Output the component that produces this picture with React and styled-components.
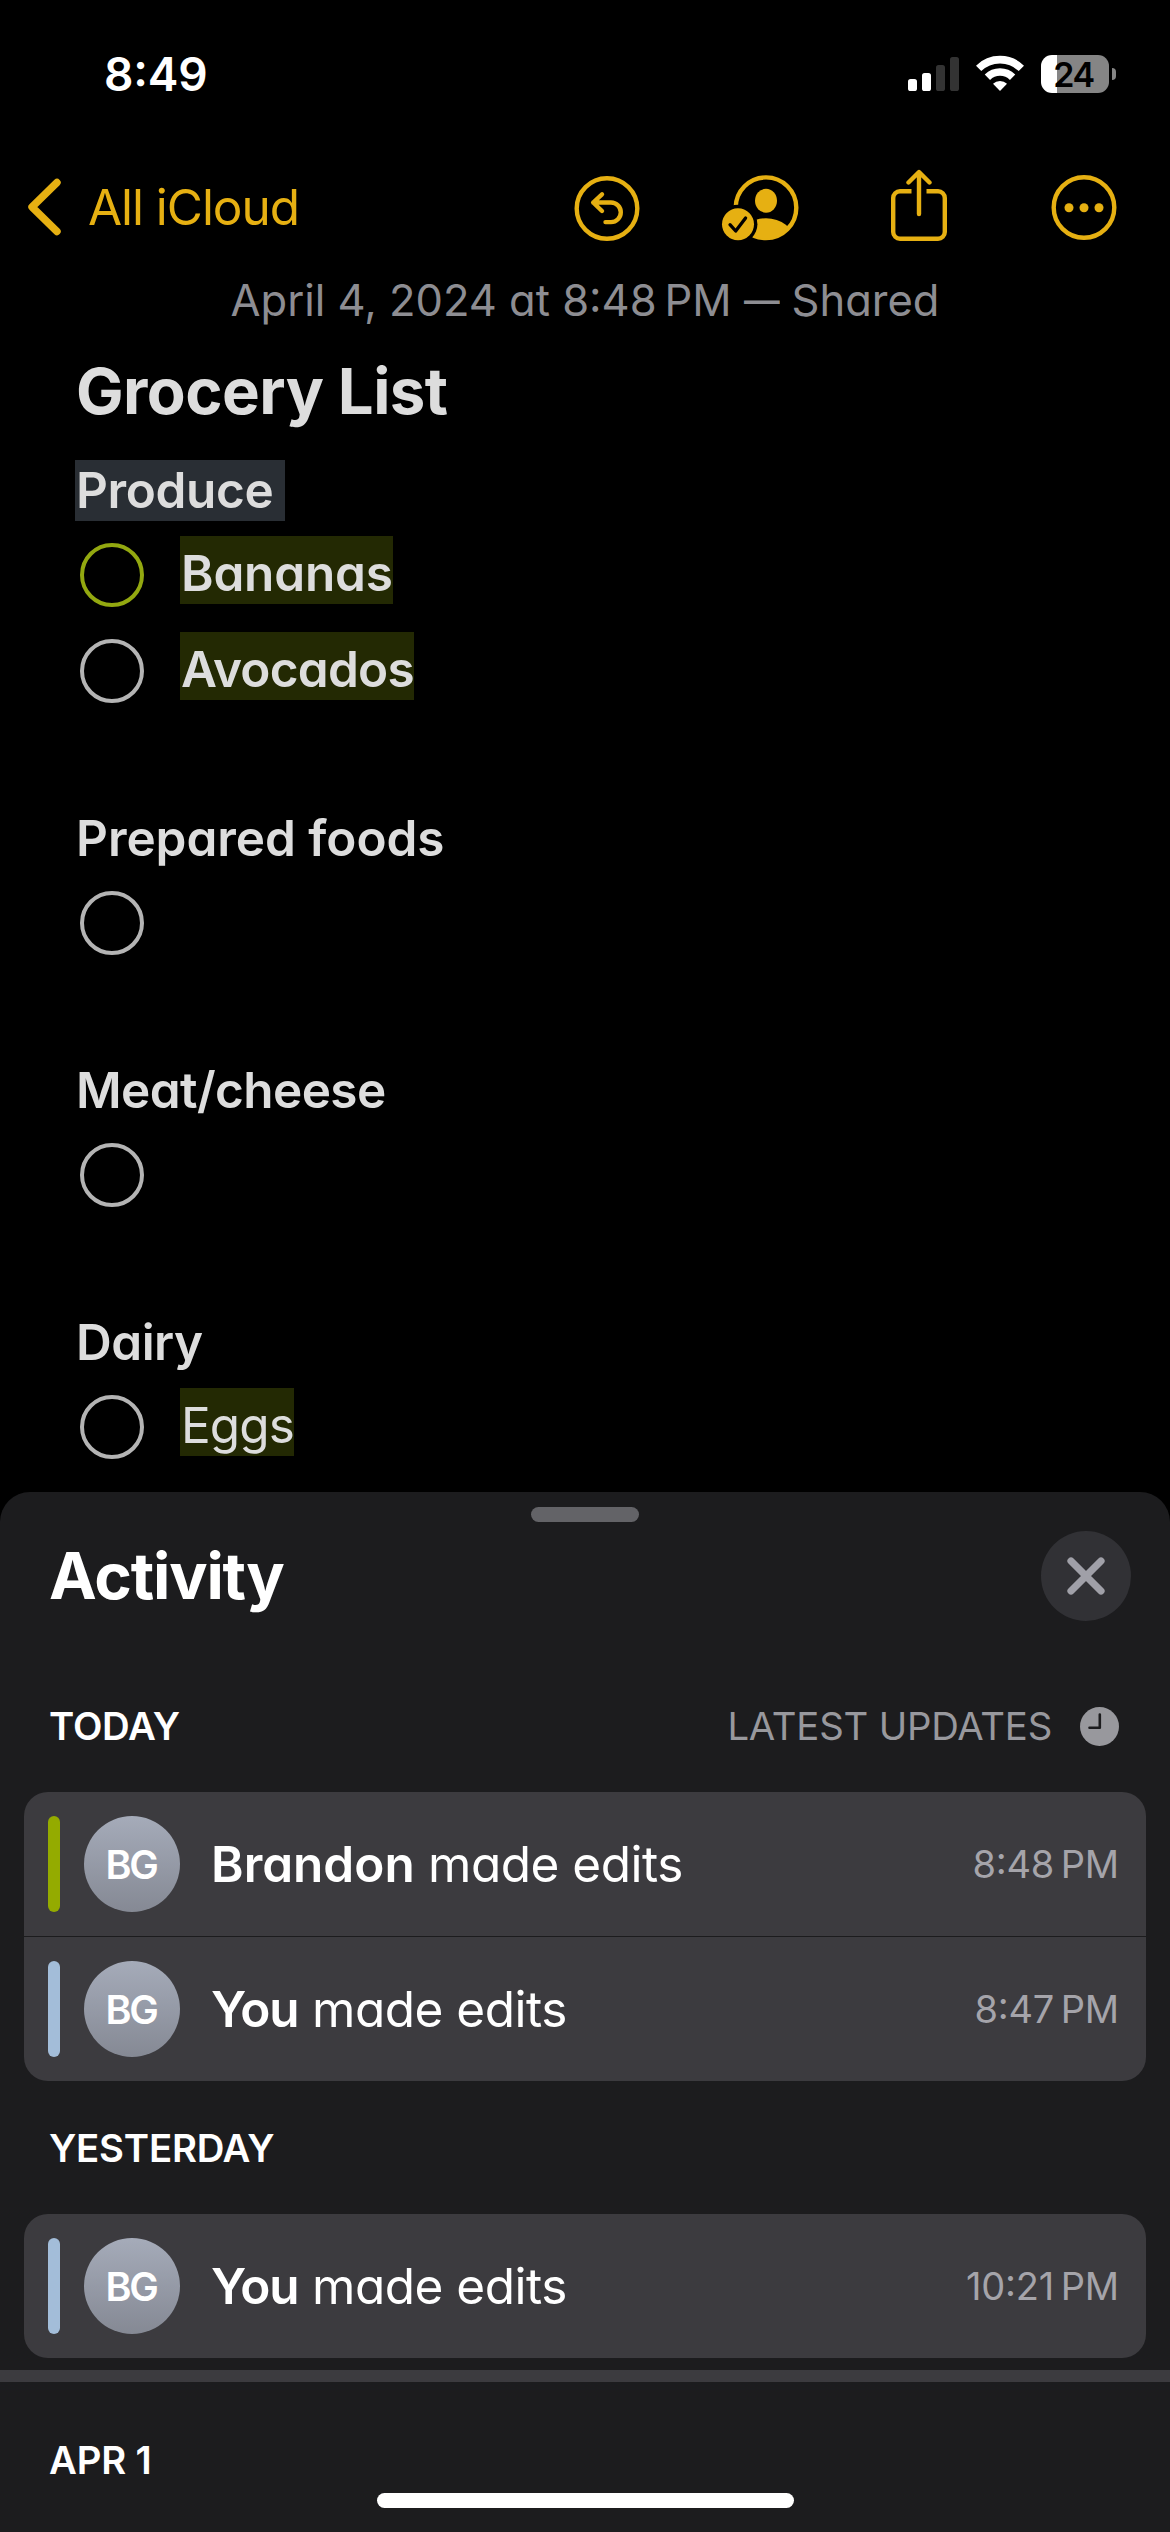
import React from 'react'
import styled, { createGlobalStyle } from 'styled-components'

const GlobalStyle = createGlobalStyle`
    body {
        margin: 0;
        background: #000000;
        font-family: Inter, "Liberation Sans", sans-serif;
        font-feature-settings: "cv11", "calt";
        font-optical-sizing: none;
    }
`

const Screen = styled.div`
    width: 1170px;
    height: 2532px;
    display: flex;
    flex-direction: column;
    overflow: hidden;
    background: #000000;
`

const StatusBar = styled.header`
    height: 146px;
    padding: 44px 54px 0 104px;
    box-sizing: border-box;
    display: flex;
    justify-content: space-between;
    align-items: flex-start;
`

const Clock = styled.div`
    font-size: 46px;
    font-weight: 600;
    line-height: 60px;
    letter-spacing: -0.2px;
    color: #ffffff;
`

const StatusIcons = styled.div`
    display: flex;
    align-items: center;
    gap: 17px;
    padding-top: 11px;
`

const Battery = styled.div`
    display: flex;
    align-items: center;
    gap: 3px;
`

const BatteryBody = styled.div`
    width: 68px;
    height: 38px;
    border-radius: 11px;
    background: linear-gradient(90deg, #ffffff 16px, #858585 16px);
    color: #000000;
    font-size: 34px;
    font-weight: 600;
    line-height: 39px;
    letter-spacing: -1.5px;
    text-align: center;
    text-indent: -3px;
`

const BatteryNub = styled.div`
    width: 4px;
    height: 12px;
    border-radius: 0 4px 4px 0;
    background: #858585;
`

const NavBar = styled.nav`
    height: 124px;
    padding: 0 51px 2px 26px;
    box-sizing: border-box;
    display: flex;
    align-items: center;
    color: #e6b012;
`

const BackLink = styled.div`
    display: flex;
    align-items: center;
    gap: 27px;
    margin-right: auto;
    font-size: 49.5px;
    line-height: 60px;
    letter-spacing: -1.05px;
`

const NavIcon = styled.svg`
    width: ${props => props.$width}px;
    height: 76px;
    margin-left: ${props => props.$gap || 0}px;
    fill: none;
    stroke: currentColor;
    stroke-width: 4.4;
    stroke-linecap: round;
    stroke-linejoin: round;
`

const Note = styled.main`
    height: 1222px;
    flex: none;
    overflow: hidden;
    color: #dddddd;
`

const NoteDate = styled.div`
    font-size: 43.5px;
    line-height: 60px;
    text-align: center;
    color: #8d8d92;
`

const Dash = styled.span`
    display: inline-block;
    margin: 0 -4px;
    transform: scaleX(0.82);
`

const NoteTitle = styled.h1`
    margin: 21px 0 29px 76px;
    font-size: 63.5px;
    font-weight: 700;
    line-height: 80px;
    letter-spacing: -0.55px;
`

const NoteSection = styled.section`
    margin: 0 0 80px 75px;
    display: flex;
    flex-direction: column;
    align-items: flex-start;
`

const SectionHeading = styled.h2`
    margin: 0 0 15px;
    padding: 0 12px 0 1px;
    font-size: 49.5px;
    font-weight: 600;
    line-height: 61px;
    letter-spacing: ${props => props.$tracking}px;
    background: ${props => props.$highlight ? '#292e34' : 'transparent'};
`

const CheckRow = styled.div`
    height: 96px;
    display: flex;
    align-items: flex-start;
`

const CheckCircle = styled.div`
    width: 64px;
    height: 64px;
    margin: 7px 36px 0 5px;
    box-sizing: border-box;
    border: 4px solid ${props => props.$active ? '#93a810' : '#b4b4b4'};
    border-radius: 50%;
`

const CheckText = styled.span`
    padding: 7px 0 0 1px;
    font-size: 49.5px;
    font-weight: ${props => props.$plain ? 400 : 600};
    line-height: 61px;
    letter-spacing: ${props => props.$tracking}px;
    background: #232903;
`

const Sheet = styled.section`
    flex: 1;
    display: flex;
    flex-direction: column;
    border-radius: 30px 30px 0 0;
    background: #1c1c1e;
    color: #ffffff;
`

const Grabber = styled.div`
    width: 108px;
    height: 15px;
    margin: 15px auto 9px;
    border-radius: 8px;
    background: #636367;
`

const SheetHeader = styled.div`
    height: 90px;
    padding: 0 39px 0 49px;
    display: flex;
    align-items: center;
    justify-content: space-between;
`

const SheetTitle = styled.h2`
    margin: 0;
    font-size: 64px;
    font-weight: 700;
    line-height: 80px;
    letter-spacing: -1.15px;
`

const CloseButton = styled.div`
    width: 90px;
    height: 90px;
    display: flex;
    align-items: center;
    justify-content: center;
    border-radius: 50%;
    background: #313135;
`

const GroupHeader = styled.div`
    margin-top: ${props => props.$top}px;
    height: 48px;
    padding: 0 51px 0 49px;
    display: flex;
    align-items: center;
    font-size: 38.3px;
    line-height: 48px;
    letter-spacing: -0.2px;
`

const GroupTitle = styled.span`
    margin-right: auto;
    font-weight: 600;
`

const SortLabel = styled.span`
    margin-right: 28px;
    color: #98989d;
`

const Card = styled.div`
    margin: 42px 24px 0;
    display: flex;
    flex-direction: column;
    gap: 1px;
    border-radius: 24px;
    overflow: hidden;
`

const ActivityRow = styled.div`
    height: 144px;
    padding: 0 27px 0 24px;
    box-sizing: border-box;
    display: flex;
    align-items: center;
    background: #3c3b3f;
`

const AuthorBar = styled.div`
    width: 12px;
    height: 96px;
    border-radius: 6px;
    background: ${props => props.$color};
`

const Avatar = styled.div`
    width: 96px;
    height: 96px;
    margin: 0 31px 0 24px;
    border-radius: 50%;
    background: linear-gradient(180deg, #a5abb9, #858994);
    font-size: 39.5px;
    font-weight: 600;
    line-height: 98px;
    letter-spacing: -2.2px;
    text-align: center;
    text-indent: -2px;
`

const ActivityText = styled.div`
    flex: 1;
    font-size: 49.5px;
    line-height: 60px;
    letter-spacing: -0.5px;
`

const AuthorName = styled.b`
    font-weight: 600;
    letter-spacing: ${props => props.$tracking}px;
`

const ActivityTime = styled.div`
    font-size: 38px;
    line-height: 48px;
    letter-spacing: -0.2px;
    color: #a5a4aa;
`

const SheetDivider = styled.div`
    height: 12px;
    margin-top: 12px;
    background: #3c3b3f;
`

const HomeIndicator = styled.div`
    width: 417px;
    height: 15px;
    margin: 9px auto 0;
    border-radius: 8px;
    background: #ffffff;
`

const GREEN = '#94ab00'
const BLUE = '#a3bdd9'

const sections = [
  {
    heading: 'Produce',
    tracking: -0.35,
    highlight: true,
    items: [
      { text: 'Bananas', tracking: -0.2, active: true },
      { text: 'Avocados', tracking: -0.75 }
    ]
  },
  { heading: 'Prepared foods', tracking: -0.05, items: [{}] },
  { heading: 'Meat/cheese', tracking: -0.6, items: [{}] },
  { heading: 'Dairy', tracking: -0.5, items: [{ text: 'Eggs', tracking: -0.9, plain: true }] }
]

const today = [
  { name: 'Brandon', tracking: 0, color: GREEN, time: '8:48\u202fPM' },
  { name: 'You', tracking: -1.1, color: BLUE, time: '8:47\u202fPM' }
]

const yesterday = [
  { name: 'You', tracking: -1.1, color: BLUE, time: '10:21\u202fPM' }
]

const SignalIcon = () => (
  <svg width="51" height="36" viewBox="0 0 51 36">
    <rect x="0" y="23" width="9" height="12" rx="2.6" fill="#fff" />
    <rect x="14" y="17" width="9" height="18" rx="2.6" fill="#fff" />
    <rect x="28" y="9" width="9" height="26" rx="2.6" fill="#333" />
    <rect x="42" y="1" width="9" height="34" rx="2.6" fill="#333" />
  </svg>
)

const WifiIcon = () => (
  <svg width="48" height="38" viewBox="0 0 48 38" fill="none" stroke="#fff" strokeWidth="7.6">
    <path d="M2.6 13.4a30.5 30.5 0 0 1 42.8 0" />
    <path d="M11.4 22.2a18 18 0 0 1 25.2 0" />
    <path d="M24 36l-7-7.2a10 10 0 0 1 14 0z" fill="#fff" stroke="none" />
  </svg>
)

const ActivityCard = ({ rows }) => (
  <Card>
    {rows.map(row => (
      <ActivityRow key={row.time}>
        <AuthorBar $color={row.color} />
        <Avatar>BG</Avatar>
        <ActivityText><AuthorName $tracking={row.tracking}>{row.name}</AuthorName> made edits</ActivityText>
        <ActivityTime>{row.time}</ActivityTime>
      </ActivityRow>
    ))}
  </Card>
)

class App extends React.Component {
  render() {
    return (
      <Screen>
        <GlobalStyle />
        <StatusBar>
          <Clock>8:49</Clock>
          <StatusIcons>
            <SignalIcon />
            <WifiIcon />
            <Battery>
              <BatteryBody>24</BatteryBody>
              <BatteryNub />
            </Battery>
          </StatusIcons>
        </StatusBar>
        <NavBar>
          <BackLink>
            <svg width="35" height="60" viewBox="0 0 35 60" fill="none" stroke="currentColor" strokeWidth="7.4" strokeLinecap="round" strokeLinejoin="round">
              <path d="M31 5.500L6 30l25 24.500" />
            </svg>
            All iCloud
          </BackLink>
          <NavIcon $width={66} viewBox="0 0 66 76">
            <circle cx="33" cy="39.500" r="30.300" />
            <path d="M28 25.300L19.200 33.500l8.800 8.500M19.200 33.500H37a9.800 9.800 0 0 1 0 19.600h-5.500" />
          </NavIcon>
          <NavIcon $width={80} $gap={80.5} viewBox="0 0 80 76">
            <clipPath id="avatar-clip">
              <circle cx="45" cy="38.700" r="31" />
            </clipPath>
            <circle cx="45" cy="38.700" r="30.300" />
            <g fill="currentColor" stroke="none">
              <ellipse cx="45" cy="31.800" rx="11" ry="12" />
              <ellipse cx="45" cy="71" rx="28" ry="21.700" clipPath="url(#avatar-clip)" />
              <circle cx="17" cy="55.200" r="19.400" fill="#000" />
              <circle cx="17" cy="55.200" r="16" />
            </g>
            <path d="M9 55.700l5.700 6.300 9.900-13" stroke="#000" strokeWidth="3.300" />
          </NavIcon>
          <NavIcon $width={60} $gap={88} viewBox="0 0 60 76">
            <path d="M22.500 22.200H11a6.800 6.800 0 0 0-6.800 6.800v34a6.800 6.800 0 0 0 6.800 6.800h38a6.800 6.800 0 0 0 6.800-6.800V29a6.800 6.800 0 0 0-6.800-6.800H37.500" strokeLinecap="butt" />
            <path d="M30 3.500V45M19.500 13.500L30 3l10.500 10.500" />
          </NavIcon>
          <NavIcon $width={70} $gap={100.5} viewBox="0 0 70 76">
            <circle cx="35" cy="38.500" r="30.300" />
            <g fill="currentColor" stroke="none">
              <circle cx="20" cy="38.700" r="4.500" />
              <circle cx="35" cy="38.700" r="4.500" />
              <circle cx="50" cy="38.700" r="4.500" />
            </g>
          </NavIcon>
        </NavBar>
        <Note>
          <NoteDate>April 4, 2024 at 8:48{'\u202f'}PM <Dash>—</Dash> Shared</NoteDate>
          <NoteTitle>Grocery List</NoteTitle>
          {sections.map(section => (
            <NoteSection key={section.heading}>
              <SectionHeading $highlight={section.highlight} $tracking={section.tracking}>{section.heading}</SectionHeading>
              {section.items.map((item, index) => (
                <CheckRow key={index}>
                  <CheckCircle $active={item.active} />
                  {item.text && <CheckText $plain={item.plain} $tracking={item.tracking}>{item.text}</CheckText>}
                </CheckRow>
              ))}
            </NoteSection>
          ))}
        </Note>
        <Sheet>
          <Grabber />
          <SheetHeader>
            <SheetTitle>Activity</SheetTitle>
            <CloseButton>
              <svg width="38" height="38" viewBox="0 0 38 38" stroke="#a0a0a8" strokeWidth="7.200" strokeLinecap="round">
                <path d="M4 4l30 30M34 4L4 34" />
              </svg>
            </CloseButton>
          </SheetHeader>
          <GroupHeader $top={81}>
            <GroupTitle>TODAY</GroupTitle>
            <SortLabel>LATEST UPDATES</SortLabel>
            <svg width="39" height="39" viewBox="0 0 39 39" fill="none">
              <circle cx="19.500" cy="19.500" r="19.500" fill="#98989d" />
              <path d="M19.800 7.500v13.200H9.500" stroke="#1c1c1e" strokeWidth="2.600" strokeLinecap="round" strokeLinejoin="round" />
            </svg>
          </GroupHeader>
          <ActivityCard rows={today} />
          <GroupHeader $top={43}>
            <GroupTitle>YESTERDAY</GroupTitle>
          </GroupHeader>
          <ActivityCard rows={yesterday} />
          <SheetDivider />
          <GroupHeader $top={54}>
            <GroupTitle>APR 1</GroupTitle>
          </GroupHeader>
          <HomeIndicator />
        </Sheet>
      </Screen>
    )
  }
}

export default App
